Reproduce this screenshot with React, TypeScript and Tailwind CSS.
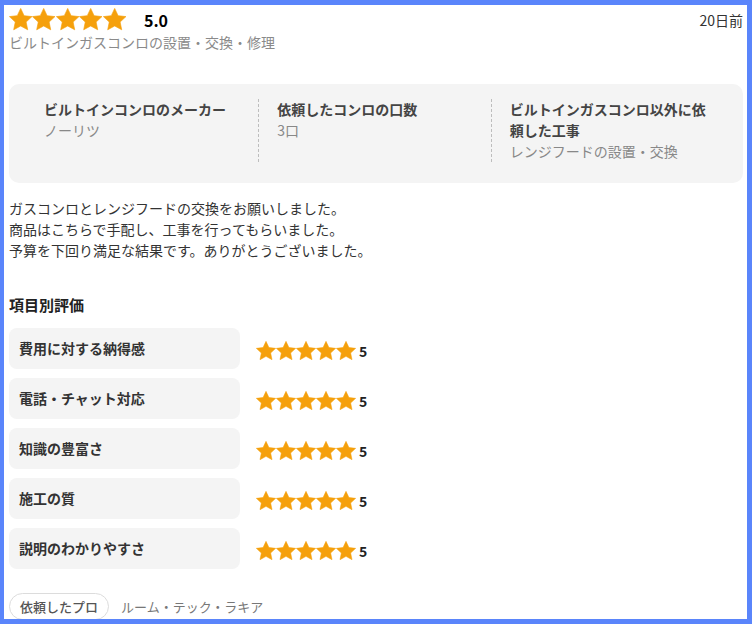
import React from 'react'

const font = { fontFamily: '"Noto Sans CJK JP", "Noto Sans", sans-serif' }

function Star({ size }: { size: number }) {
  return (
    <svg width={size} height={size} viewBox="1 1 22 22" className="shrink-0">
      <polygon
        points="12,1.4 15.2,8.2 22.6,9.1 17.1,14.2 18.6,21.5 12,17.9 5.4,21.5 6.9,14.2 1.4,9.1 8.8,8.2"
        fill="#f5a00c"
        stroke="#f5a00c"
        strokeWidth="0.6"
        strokeLinejoin="round"
      />
    </svg>
  )
}

function Stars({ size, count = 5 }: { size: number; count?: number }) {
  return (
    <div className="flex">
      {Array.from({ length: count }).map((_, i) => (
        <Star key={i} size={size} />
      ))}
    </div>
  )
}

const details = [
  { label: 'ビルトインコンロのメーカー', value: 'ノーリツ' },
  { label: '依頼したコンロの口数', value: '3口' },
  { label: 'ビルトインガスコンロ以外に依頼した工事', value: 'レンジフードの設置・交換' },
]

const ratings = ['費用に対する納得感', '電話・チャット対応', '知識の豊富さ', '施工の質', '説明のわかりやすさ']

export default function App() {
  return (
    <div
      className="w-[752px] h-[624px] overflow-hidden bg-white border-[#5a85fb] border-t-[5px] border-l-4 border-r-[5px] border-b-[5px]"
      style={font}
    >
      <div className="pl-[5px] pr-[4px] pt-[3px]">
        {/* Header */}
        <div className="flex items-center justify-between h-6">
          <div className="flex items-center">
            <Stars size={23.4} />
            <span className="ml-[18px] text-[16px] font-bold text-black leading-6">5.0</span>
          </div>
          <span className="text-[14px] text-[#333] leading-6">20日前</span>
        </div>
        <p className="text-[14px] leading-5 text-[#8a8a8a]">ビルトインガスコンロの設置・交換・修理</p>

        {/* Details box */}
        <div className="mt-[32px] bg-[#f4f4f4] rounded-[10px] pl-[17px] pr-[20px] pt-[15px] pb-[21px] grid grid-cols-3">
          {details.map((d, i) => (
            <div
              key={d.label}
              className={`pl-[18px] pr-3 ${i > 0 ? 'border-l border-dashed border-[#bdbdbd]' : ''}`}
            >
              <p className="text-[14px] leading-[21px] font-bold text-[#444]">{d.label}</p>
              <p className="text-[14px] leading-[21px] text-[#888]">{d.value}</p>
            </div>
          ))}
        </div>

        {/* Comment */}
        <div className="mt-[15px] text-[14px] leading-[21px] text-[#333]">
          <p>ガスコンロとレンジフードの交換をお願いしました。</p>
          <p>商品はこちらで手配し、工事を行ってもらいました。</p>
          <p>予算を下回り満足な結果です。ありがとうございました。</p>
        </div>

        {/* Ratings */}
        <h3 className="mt-[33px] text-[15px] leading-[22px] font-bold text-[#222]">項目別評価</h3>
        <div className="mt-[12px] flex flex-col gap-[9px]">
          {ratings.map((r) => (
            <div key={r} className="flex items-center">
              <div className="w-[231px] h-[41px] bg-[#f4f4f4] rounded-[8px] flex items-center pl-[10px]">
                <span className="text-[14px] font-bold text-[#333]">{r}</span>
              </div>
              <div className="ml-[16px] flex items-center mt-[4px]">
                <Stars size={20} />
                <span className="ml-[3px] text-[14px] font-bold text-[#222] leading-5">5</span>
              </div>
            </div>
          ))}
        </div>

        {/* Pro */}
        <div className="mt-[24px] flex items-center">
          <span className="h-[27px] px-[10px] flex items-center rounded-full border border-[#dcdcdc] text-[13px] font-medium text-[#555]">
            依頼したプロ
          </span>
          <span className="ml-[12px] text-[13px] text-[#777]">ルーム・テック・ラキア</span>
        </div>
      </div>
    </div>
  )
}
